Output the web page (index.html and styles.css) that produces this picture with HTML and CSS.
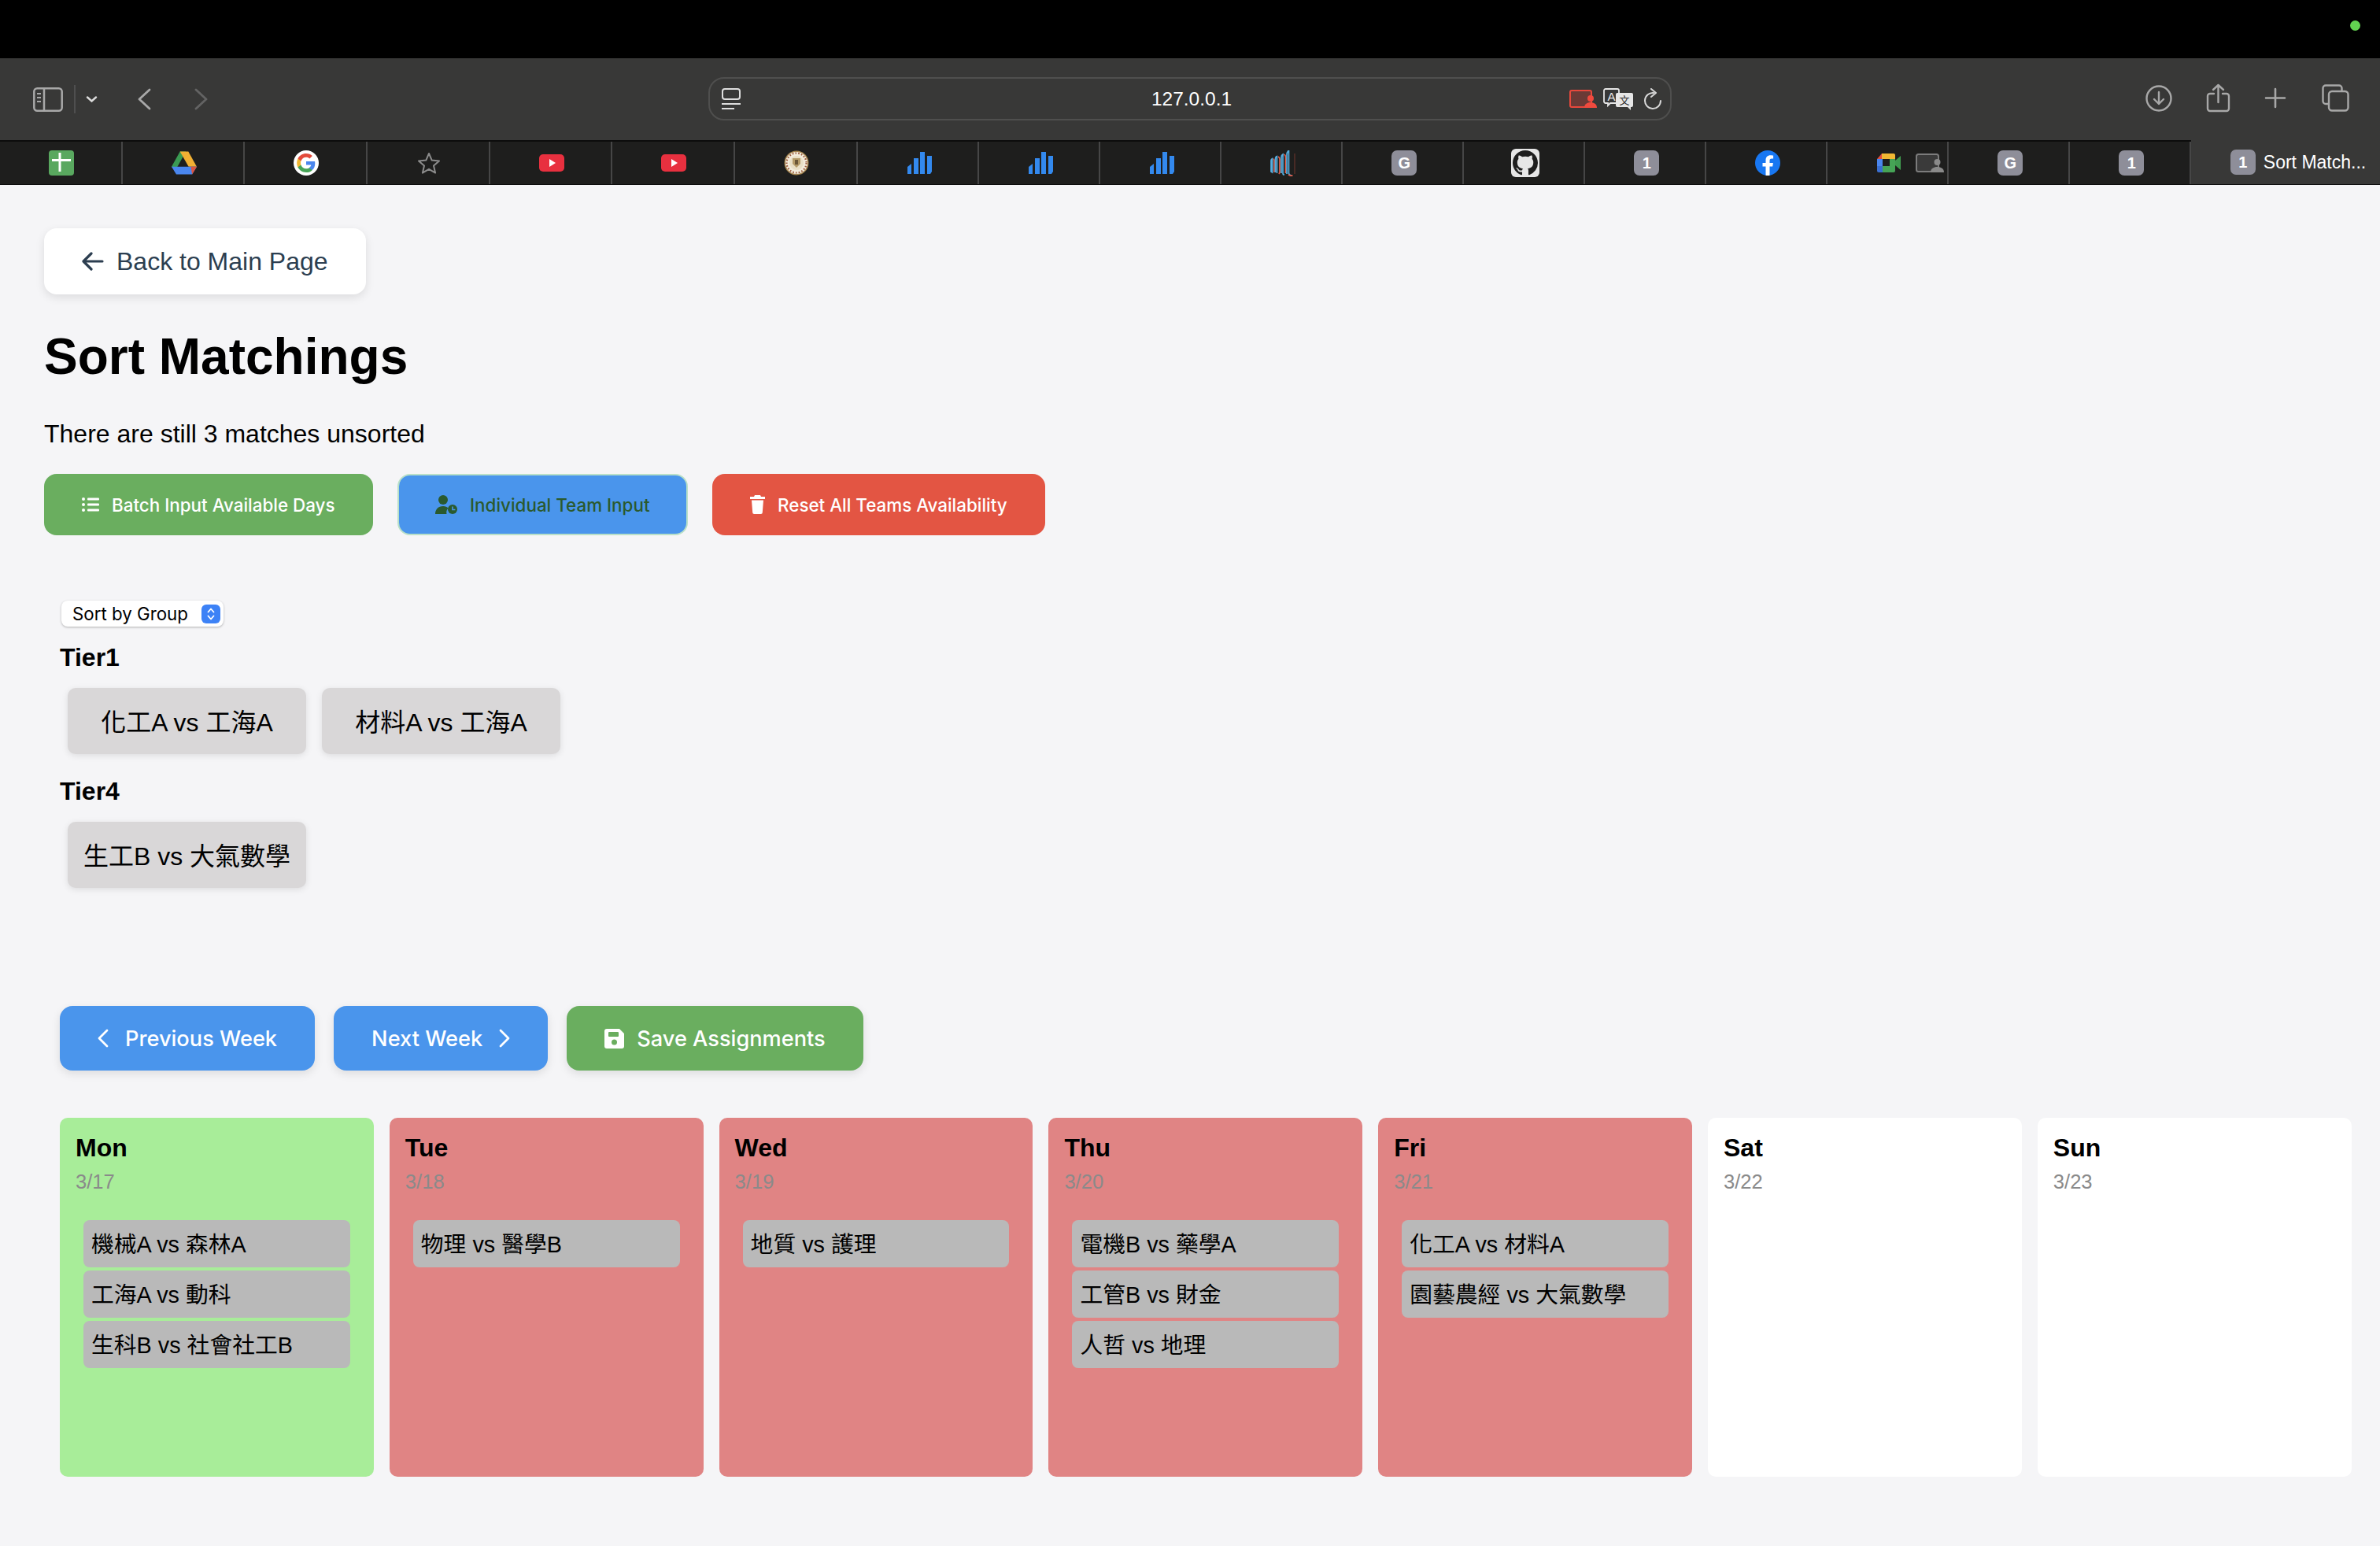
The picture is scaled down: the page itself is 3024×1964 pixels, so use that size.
FILE: index.html
```html
<!DOCTYPE html>
<html lang="zh-Hant">
<head>
<meta charset="utf-8">
<title>Sort Matchings</title>
<link rel="stylesheet" href="styles.css">
</head>
<body>
<div class="menubar"><span class="mic-dot"></span></div>

<header class="toolbar">
  <div class="tb-left">
    <svg class="ic-sidebar" viewBox="0 0 38 31" fill="none" stroke="#a8a8a8" stroke-width="2.5"><rect x="1.3" y="1.3" width="35.4" height="28.4" rx="4"/><path d="M14 1.3v28.4"/><path d="M5 8h5M5 13h5M5 18h5" stroke-width="2"/></svg>
    <span class="tb-divider"></span>
    <svg class="ic-caret" viewBox="0 0 15 8" fill="none" stroke="#dcdcdc" stroke-width="2.4" stroke-linecap="round"><path d="M2 1.5l5.5 5 5.5-5"/></svg>
    <svg class="ic-back" viewBox="0 0 17 28" fill="none" stroke="#a8a8a8" stroke-width="2.8" stroke-linecap="round" stroke-linejoin="round"><path d="M15 2L2 14l13 12"/></svg>
    <svg class="ic-forward" viewBox="0 0 17 28" fill="none" stroke="#636363" stroke-width="2.8" stroke-linecap="round" stroke-linejoin="round"><path d="M2 2l13 12L2 26"/></svg>
  </div>
  <div class="urlbar">
    <svg class="ic-reader" viewBox="0 0 24 27" fill="none" stroke="#dedede" stroke-width="2"><rect x="1" y="1" width="22" height="13" rx="3"/><path d="M0 20h24" /><path d="M0 26h16"/></svg>
    <span class="url-text">127.0.0.1</span>
    <div class="url-tools">
      <svg class="ic-pip-red" viewBox="0 0 36 23"><rect x="1" y="1" width="27" height="21" rx="2" fill="#6b3a36" stroke="#e8483c" stroke-width="2"/><circle cx="27" cy="11" r="4" fill="#f04a3e"/><path d="M19 23c0-5 4-7 8-7s8 2 8 7z" fill="#f04a3e"/></svg>
      <svg class="ic-translate" viewBox="0 0 38 28"><path d="M3 1h15a2 2 0 0 1 2 2v14a2 2 0 0 1-2 2H9l-3 3v-3H3a2 2 0 0 1-2-2V3a2 2 0 0 1 2-2z" fill="#383838" stroke="#e6e6e6" stroke-width="1.8"/><text x="10.500" y="15.500" class="tr-a">A</text><path d="M18 6h18a2 2 0 0 1 2 2v14a2 2 0 0 1-2 2h-1v4l-4-4H18a2 2 0 0 1-2-2V8a2 2 0 0 1 2-2z" fill="#e6e6e6"/><text x="27" y="20" class="tr-b">文</text></svg>
      <svg class="ic-reload" viewBox="0 0 23 27" fill="none" stroke="#d8d8d8" stroke-width="2" stroke-linecap="round" stroke-linejoin="round"><path d="M13 6a10 10 0 1 0 9 10"/><path d="M10 1l6 5-6 5"/></svg>
    </div>
  </div>
  <div class="tb-right">
    <svg class="ic-download" viewBox="0 0 34 34" fill="none" stroke="#a8a8a8" stroke-width="2.4" stroke-linecap="round" stroke-linejoin="round"><circle cx="17" cy="17" r="15.500"/><path d="M17 9v15M11 18l6 6 6-6"/></svg>
    <svg class="ic-share" viewBox="0 0 31 37" fill="none" stroke="#a8a8a8" stroke-width="2.400" stroke-linecap="round" stroke-linejoin="round"><path d="M10 13H5a3 3 0 0 0-3 3v16a3 3 0 0 0 3 3h21a3 3 0 0 0 3-3V16a3 3 0 0 0-3-3h-5"/><path d="M15.500 24V2M9 8l6.500-6L22 8"/></svg>
    <svg class="ic-plus" viewBox="0 0 28 27" fill="none" stroke="#a8a8a8" stroke-width="2.600" stroke-linecap="round"><path d="M14 2v23M2 13.500h24"/></svg>
    <svg class="ic-tabs" viewBox="0 0 35 35" fill="none" stroke="#a8a8a8" stroke-width="2.400"><path d="M8 25H5a3.500 3.500 0 0 1-3.500-3.500V5A3.500 3.500 0 0 1 5 1.500h17A3.500 3.500 0 0 1 25.500 5v3"/><rect x="9" y="9" width="24.500" height="24.500" rx="4"/></svg>
  </div>
</header>

<nav class="tabstrip">
  <div class="tab">
    <svg class="fav" viewBox="0 0 32 32"><rect width="32" height="32" rx="4" fill="#59a85f"/><path d="M12.500 3h3v24h-3zM4 11h24v3H4z" fill="#fff"/></svg>
  </div>
  <div class="tab">
    <svg class="fav" viewBox="0 0 30 27"><path d="M10 0h7L7 18l-3.500 3-3.500-3z" fill="#3a9a52"/><path d="M10 0h10l10 18H20.300z" fill="#f1b033"/><path d="M5.600 27L0 18h30l-5.500 9z" fill="#4a86ee"/><path d="M23 18h7l-5.500 9z" fill="#dd5440"/></svg>
  </div>
  <div class="tab">
    <svg class="fav" viewBox="0 0 32 32"><circle cx="16" cy="16" r="16" fill="#fff"/><g transform="translate(16 16) scale(1.270) translate(-16 -16)"><path d="M24.900 16.300c0-.7-.1-1.300-.2-1.900H16v3.600h5c-.2 1.100-.9 2.100-1.900 2.800v2.300h3c1.800-1.600 2.800-4 2.800-6.800z" fill="#4a86ee"/><path d="M16 25.500c2.500 0 4.600-.8 6.100-2.300l-3-2.300c-.8.600-1.900.9-3.100.9-2.400 0-4.400-1.600-5.200-3.800H7.700v2.400c1.500 3 4.700 5.100 8.300 5.100z" fill="#46a456"/><path d="M10.800 18c-.2-.6-.3-1.300-.3-2s.1-1.400.3-2v-2.400H7.700C7.100 12.900 6.700 14.400 6.700 16s.4 3.100 1 4.400z" fill="#f1b833"/><path d="M16 10.200c1.400 0 2.600.5 3.500 1.400l2.700-2.700C20.600 7.400 18.500 6.500 16 6.500c-3.600 0-6.800 2.100-8.300 5.100l3.100 2.400c.8-2.200 2.800-3.800 5.200-3.800z" fill="#e24a3b"/></g></svg>
  </div>
  <div class="tab">
    <svg class="fav fav-star" viewBox="0 0 30 28" fill="none" stroke="#8c8c8c" stroke-width="2" stroke-linejoin="round"><path d="M15 2l3.700 8.600 9.300.8-7 6.100 2.100 9.100L15 21.800l-8.100 4.800L9 17.500l-7-6.100 9.300-.8z"/></svg>
  </div>
  <div class="tab">
    <svg class="fav fav-yt" viewBox="0 0 32 22"><rect width="32" height="22" rx="5" fill="#e8303f"/><path d="M13 6l8 5-8 5z" fill="#fff"/></svg>
  </div>
  <div class="tab">
    <svg class="fav fav-yt" viewBox="0 0 32 22"><rect width="32" height="22" rx="5" fill="#e8303f"/><path d="M13 6l8 5-8 5z" fill="#fff"/></svg>
  </div>
  <div class="tab">
    <svg class="fav" viewBox="0 0 32 32"><circle cx="16" cy="16" r="15.500" fill="#a5854f"/><circle cx="16" cy="16" r="14" fill="#f3ecdc"/><circle cx="16" cy="16" r="12.500" fill="none" stroke="#9c5a3e" stroke-width="2.200" stroke-dasharray="1.600 2.200"/><circle cx="16" cy="16" r="9" fill="#e9dfc6"/><path d="M11 10h10v7l-5 5-5-5z" fill="#b49a68"/><path d="M14 12h4v6h-4z" fill="#6a5636"/></svg>
  </div>
  <div class="tab tab-late">
    <svg class="fav fav-bars" viewBox="0 0 31 28" fill="#3389ee"><path d="M0 28V19l5-4v13zM8 28V8h6v20zM16 28V0h6v28zM25 28V5h6v20l-2 3z"/></svg>
  </div>
  <div class="tab tab-late">
    <svg class="fav fav-bars" viewBox="0 0 31 28" fill="#3389ee"><path d="M0 28V19l5-4v13zM8 28V8h6v20zM16 28V0h6v28zM25 28V5h6v20l-2 3z"/></svg>
  </div>
  <div class="tab tab-late">
    <svg class="fav fav-bars" viewBox="0 0 31 28" fill="#3389ee"><path d="M0 28V19l5-4v13zM8 28V8h6v20zM16 28V0h6v28zM25 28V5h6v20l-2 3z"/></svg>
  </div>
  <div class="tab tab-late">
    <svg class="fav fav-outline" viewBox="0 0 32 33" fill="none" stroke-width="1.700"><path d="M1 27V13q0-2 1.500-2.500V28z" stroke="#55aee0"/><path d="M3.500 11q1.500 0 1.500 2v15" stroke="#e0604f"/><path d="M6.500 28V11q0-3 2-3.500V29" stroke="#55aee0"/><path d="M10 8q2 1 2 3v17l-1 2" stroke="#e0604f"/><path d="M14 29V9q0-3 2-4v24q0 2 2 2" stroke="#55aee0"/><path d="M17.500 5q2 1 2 4v20" stroke="#e0604f"/><path d="M21 30V6q0-4 2.500-6v29q0 2 3 3" stroke="#55aee0"/><path d="M23 31q3 1.500 5.500 1" stroke="#e0604f"/><path d="M31 4v26" stroke="#7a3a30" stroke-width=".9"/></svg>
  </div>
  <div class="tab tab-late"><span class="badge">G</span></div>
  <div class="tab tab-late">
    <span class="gh-tile"><svg class="gh-mark" viewBox="0 0 16 16" fill="#1e1e1e"><path d="M8 0C3.580 0 0 3.580 0 8c0 3.540 2.290 6.530 5.470 7.590.4.070.55-.17.55-.38 0-.19-.01-.82-.01-1.490-2.010.37-2.530-.49-2.690-.94-.09-.23-.48-.94-.82-1.130-.28-.15-.68-.52-.01-.53.63-.01 1.080.58 1.230.82.72 1.210 1.870.87 2.330.66.07-.52.28-.87.51-1.070-1.780-.2-3.640-.89-3.640-3.950 0-.87.31-1.590.82-2.150-.08-.2-.36-1.020.08-2.120 0 0 .67-.21 2.200.82.64-.18 1.320-.27 2-.27.68 0 1.360.09 2 .27 1.530-1.040 2.200-.82 2.200-.82.44 1.100.16 1.920.08 2.120.51.56.82 1.270.82 2.150 0 3.070-1.870 3.750-3.650 3.950.29.25.54.73.54 1.480 0 1.070-.01 1.930-.01 2.200 0 .21.15.46.55.38A8.013 8.013 0 0016 8c0-4.420-3.580-8-8-8z"/></svg></span>
  </div>
  <div class="tab tab-late"><span class="badge">1</span></div>
  <div class="tab tab-late">
    <svg class="fav" viewBox="0 0 32 32"><circle cx="16" cy="16" r="16" fill="#1877f2"/><path d="M22.200 20.600l.7-4.600h-4.400v-3c0-1.300.6-2.500 2.600-2.500h2V6.500s-1.800-.3-3.600-.3c-3.600 0-6 2.200-6 6.200V16H9.500v4.600h4v11.200c.8.100 1.600.2 2.500.2s1.700-.1 2.500-.2V20.600z" fill="#fff"/></svg>
  </div>
  <div class="tab tab-late tab-meet">
    <svg class="fav-meet" viewBox="0 0 30 24"><path d="M6 0h15a2 2 0 0 1 2 2v5H6z" fill="#f1b833"/><path d="M6 0v7H0z" fill="#e0503f"/><path d="M0 7h7v9H0z" fill="#4a86ee"/><path d="M0 16h7v8H2a2 2 0 0 1-2-2z" fill="#3a6fd0"/><path d="M7 16h16v6a2 2 0 0 1-2 2H7z" fill="#46a456"/><path d="M16 7h7v9h-7z" fill="#46a456"/><path d="M23 9l7-6v18l-7-6z" fill="#3f9a4f"/></svg>
    <svg class="fav-pip" viewBox="0 0 36 24"><rect x="1" y="1" width="28" height="22" rx="2.500" fill="#3a3a3a" stroke="#7c7c7c" stroke-width="2"/><circle cx="27.500" cy="11" r="4" fill="#8a8a8a"/><path d="M19 24c0-5 4-7 8.500-7s8.500 2 8.500 7z" fill="#8a8a8a"/></svg>
  </div>
  <div class="tab tab-late"><span class="badge">G</span></div>
  <div class="tab tab-late"><span class="badge">1</span></div>
  <div class="tab tab-active"><span class="badge">1</span><span class="tab-title">Sort Match...</span></div>
</nav>

<main class="page">
  <a class="back-btn">
    <svg class="ic-arrow" viewBox="0 0 28 24" fill="none" stroke="#2c3e50" stroke-width="3.200" stroke-linecap="round" stroke-linejoin="round"><path d="M26 12H3M12 2L2 12l10 10"/></svg>
    Back to Main Page
  </a>
  <h1 class="title">Sort Matchings</h1>
  <p class="status">There are still 3 matches unsorted</p>
  <div class="actions">
    <button class="act act-green">
      <svg class="act-ic" viewBox="0 0 22 20" fill="#fff"><circle cx="2" cy="3" r="2"/><circle cx="2" cy="10" r="2"/><circle cx="2" cy="17" r="2"/><rect x="7" y="1.500" width="15" height="3" rx="1"/><rect x="7" y="8.500" width="15" height="3" rx="1"/><rect x="7" y="15.500" width="15" height="3" rx="1"/></svg>
      Batch Input Available Days
    </button>
    <button class="act act-blue">
      <svg class="act-ic act-ic-user" viewBox="0 0 28 24" fill="#2a5a2e"><circle cx="10" cy="6" r="6"/><path d="M0 24c0-6 4-10 10-10 3 0 5 1 6.500 2.500A8 8 0 0 0 14.500 24z"/><circle cx="22" cy="18" r="6"/><path d="M21.200 14.500h1.600v3.200h2.600v1.600h-4.200z" fill="#4a95ec"/></svg>
      Individual Team Input
    </button>
    <button class="act act-red">
      <svg class="act-ic act-ic-trash" viewBox="0 0 19 24" fill="#fff"><path d="M6 0h7l1 2h5v3H0V2h5z"/><path d="M2 6.500h15L15.800 22a2 2 0 0 1-2 2H5.200a2 2 0 0 1-2-2z"/></svg>
      Reset All Teams Availability
    </button>
  </div>

  <section class="pool">
    <div class="sort-wrap">
      <select class="sort-select"><option>Sort by Group</option></select>
      <span class="stepper"><svg viewBox="0 0 12 18" fill="none" stroke="#fff" stroke-width="1.800" stroke-linecap="round" stroke-linejoin="round"><path d="M2.500 6.500L6 2.500l3.500 4M2.500 11.500L6 15.500l3.500-4"/></svg></span>
    </div>
    <h3 class="tier">Tier1</h3>
    <div class="chips">
      <div class="chip">化工A vs 工海A</div>
      <div class="chip">材料A vs 工海A</div>
    </div>
    <h3 class="tier">Tier4</h3>
    <div class="chips">
      <div class="chip">生工B vs 大氣數學</div>
    </div>
  </section>

  <div class="week-nav">
    <button class="nav-btn nav-blue">
      <svg class="nav-ic" viewBox="0 0 14 24" fill="none" stroke="#fff" stroke-width="2.800" stroke-linecap="round" stroke-linejoin="round"><path d="M12 2L2 12l10 10"/></svg>
      Previous Week
    </button>
    <button class="nav-btn nav-blue">
      Next Week
      <svg class="nav-ic" viewBox="0 0 14 24" fill="none" stroke="#fff" stroke-width="2.800" stroke-linecap="round" stroke-linejoin="round"><path d="M2 2l10 10L2 22"/></svg>
    </button>
    <button class="nav-btn nav-green">
      <svg class="nav-ic nav-ic-save" viewBox="0 0 25 25"><path d="M3 0h16l6 6v16a3 3 0 0 1-3 3H3a3 3 0 0 1-3-3V3a3 3 0 0 1 3-3z" fill="#fff"/><rect x="5" y="4" width="13" height="6" rx="1" fill="#6aae5f"/><circle cx="12.500" cy="17" r="3.500" fill="#6aae5f"/></svg>
      Save Assignments
    </button>
  </div>

  <section class="calendar">
    <article class="day day-ok">
      <h4 class="day-name">Mon</h4><div class="day-date">3/17</div>
      <ul class="matches"><li>機械A vs 森林A</li><li>工海A vs 動科</li><li>生科B vs 社會社工B</li></ul>
    </article>
    <article class="day day-bad">
      <h4 class="day-name">Tue</h4><div class="day-date">3/18</div>
      <ul class="matches"><li>物理 vs 醫學B</li></ul>
    </article>
    <article class="day day-bad">
      <h4 class="day-name">Wed</h4><div class="day-date">3/19</div>
      <ul class="matches"><li>地質 vs 護理</li></ul>
    </article>
    <article class="day day-bad">
      <h4 class="day-name">Thu</h4><div class="day-date">3/20</div>
      <ul class="matches"><li>電機B vs 藥學A</li><li>工管B vs 財金</li><li>人哲 vs 地理</li></ul>
    </article>
    <article class="day day-bad">
      <h4 class="day-name">Fri</h4><div class="day-date">3/21</div>
      <ul class="matches"><li>化工A vs 材料A</li><li>園藝農經 vs 大氣數學</li></ul>
    </article>
    <article class="day">
      <h4 class="day-name">Sat</h4><div class="day-date">3/22</div>
    </article>
    <article class="day">
      <h4 class="day-name">Sun</h4><div class="day-date">3/23</div>
    </article>
  </section>
</main>
</body>
</html>
```

FILE: styles.css
```css
* { box-sizing: border-box; }
html, body { margin: 0; padding: 0; }
body {
  width: 3024px;
  height: 1964px;
  overflow: hidden;
  background: #f5f5f7;
  font-family: "Liberation Sans", "Noto Sans CJK TC", sans-serif;
  color: #000;
}
svg { display: block; flex: none; }

/* macOS menu bar */
.menubar {
  height: 74px;
  background: #000;
  display: flex;
  justify-content: flex-end;
  padding: 26px 25px 0 0;
}
.mic-dot { width: 13px; height: 13px; border-radius: 50%; background: #63d451; }

/* Safari toolbar */
.toolbar {
  height: 104px;
  background: #383837;
  display: grid;
  grid-template-columns: 900px 1224px 1fr;
  align-items: center;
}
.tb-left { display: flex; align-items: center; padding-left: 42px; }
.ic-sidebar { width: 38px; height: 31px; }
.tb-divider { width: 2px; height: 36px; background: #4f4f4f; margin-left: 14px; }
.ic-caret { width: 15px; height: 8px; margin-left: 13px; }
.ic-back { width: 17px; height: 28px; margin-left: 51px; }
.ic-forward { width: 17px; height: 28px; margin-left: 55px; }

.urlbar {
  height: 55px;
  margin-top: -1px;
  border: 2px solid #4f4f4e;
  border-radius: 20px;
  display: grid;
  grid-template-columns: 1fr auto 1fr;
  align-items: center;
  padding: 0 11px 0 15px;
}
.ic-reader { width: 24px; height: 27px; }
.url-text { color: #fff; font-size: 24.500px; line-height: 30px; }
.url-tools { display: flex; align-items: center; justify-content: flex-end; }
.ic-pip-red { width: 36px; height: 23px; }
.ic-translate { width: 38px; height: 28px; margin-left: 7px; }
.ic-reload { width: 23px; height: 27px; margin-left: 13px; }
.tr-a { font: 15px "Liberation Sans", sans-serif; fill: #e6e6e6; text-anchor: middle; }
.tr-b { font: 13px "Noto Sans CJK TC", sans-serif; fill: #2c2c2c; text-anchor: middle; }

.tb-right { display: flex; align-items: center; justify-content: flex-end; padding-right: 39px; gap: 43px; }
.ic-download { width: 34px; height: 34px; margin-top: -2px; }
.ic-share { width: 31px; height: 37px; margin-top: -4px; }
.ic-plus { width: 28px; height: 27px; margin-top: -3px; }
.ic-tabs { width: 35px; height: 35px; margin: -3px 0 0 2px; }

/* Tab strip */
.tabstrip {
  height: 57px;
  background: #1e1e1d;
  border-top: 2px solid #0c0c0c;
  border-bottom: 1px solid #0c0c0c;
  display: grid;
  grid-template-columns: repeat(7, 155.7px) repeat(11, 154px) 1fr;
}
.tab {
  display: flex;
  align-items: center;
  justify-content: center;
  padding-left: 2px;
  border-right: 2px solid #464646;
}
.tab-late { padding-left: 5px; }
.fav { width: 32px; height: 32px; }
.fav-star { width: 30px; height: 28px; }
.fav-yt { height: 22px; }
.fav-bars { width: 31px; height: 28px; }
.fav-outline { width: 32px; height: 33px; }
.tab-meet { justify-content: flex-end; padding-right: 4px; gap: 19px; }
.fav-meet { width: 30px; height: 24px; }
.fav-pip { width: 36px; height: 24px; }
.badge {
  width: 32px;
  height: 32px;
  border-radius: 7px;
  background: #8e8e99;
  color: #fff;
  font-size: 20px;
  font-weight: 700;
  display: flex;
  align-items: center;
  justify-content: center;
}
.gh-tile {
  width: 36px;
  height: 36px;
  border-radius: 6px;
  background: #e6e6e6;
  display: flex;
  align-items: center;
  justify-content: center;
}
.gh-mark { width: 32px; height: 32px; }
.tab-active {
  background: #383837;
  border-right: 0;
  margin-top: -2px;
  justify-content: flex-start;
  padding-left: 50px;
  gap: 10px;
}
.tab-title { color: #fff; font-size: 23px; white-space: nowrap; }

/* Page */
.page { padding: 55px 35px 0 56px; }
.back-btn {
  display: inline-flex;
  align-items: center;
  gap: 16px;
  height: 84px;
  padding: 0 48px;
  background: #fff;
  border-radius: 16px;
  box-shadow: 0 4px 12px rgba(0, 0, 0, .1);
  color: #2c3e50;
  font-size: 32px;
}
.ic-arrow { width: 28px; height: 24px; }
.title { margin: 42px 0 0; font-size: 64px; line-height: 74px; font-weight: 700; }
.status { margin: 42px 0 0; font-size: 32px; line-height: 38px; }
.actions { display: flex; gap: 31.500px; margin-top: 32px; }
.act {
  display: flex;
  align-items: center;
  gap: 16px;
  height: 78px;
  padding: 0 48px;
  border: 0;
  border-radius: 16px;
  color: #fff;
  font-family: Inter, sans-serif;
  font-size: 22.400px;
  font-weight: 500;
}
.act-green { background: #6aae5f; }
.act-blue { background: #4a95ec; color: #2a5a2e; border: 2px solid #b9e0c8; padding: 0 46px; }
.act-red { background: #e35543; }
.act-ic { width: 22px; height: 20px; }
.act-ic-user { width: 28px; height: 24px; }
.act-ic-trash { width: 19px; height: 24px; }

.pool { padding-left: 20px; margin-top: 83px; }
.sort-wrap { position: relative; width: 206px; height: 33px; margin-left: 2px; }
.sort-select {
  appearance: none;
  -webkit-appearance: none;
  width: 100%;
  height: 100%;
  padding: 0 0 0 14px;
  border: 0;
  border-radius: 8px;
  background: #fff;
  box-shadow: 0 1px 3px rgba(0, 0, 0, .28);
  color: #000;
  font-family: Inter, sans-serif;
  font-size: 22.300px;
}
.stepper {
  position: absolute;
  right: 4px;
  top: 5px;
  width: 24px;
  height: 24px;
  border-radius: 6px;
  background: #3d82f6;
  display: flex;
  align-items: center;
  justify-content: center;
  pointer-events: none;
}
.stepper svg { width: 12px; height: 18px; }
.tier { margin: 21px 0 21px; font-size: 32px; line-height: 36px; font-weight: 700; }
.chips { display: flex; gap: 20px; margin-left: 10px; }
.chip {
  width: 303px;
  height: 84px;
  padding-bottom: 2px;
  border-radius: 10px;
  background: #d9d7d8;
  box-shadow: 0 2px 8px rgba(0, 0, 0, .1);
  display: flex;
  align-items: center;
  justify-content: center;
  font-size: 32px;
}
.chips + .tier { margin-top: 29px; }

.week-nav { display: flex; gap: 24px; margin: 150px 0 0 20px; }
.nav-btn {
  display: flex;
  align-items: center;
  gap: 21px;
  height: 82px;
  padding: 0 48px;
  border: 0;
  border-radius: 16px;
  color: #fff;
  font-family: Inter, sans-serif;
  font-size: 27.200px;
  font-weight: 500;
  box-shadow: 0 4px 12px rgba(0, 0, 0, .1);
}
.nav-blue { background: #4a95ec; }
.nav-green { background: #6aae5f; gap: 16px; }
.nav-ic { width: 14px; height: 24px; }
.nav-ic-save { width: 25px; height: 25px; }

.calendar {
  display: grid;
  grid-template-columns: repeat(7, 398.8px);
  gap: 20px;
  margin: 60px 0 0 20px;
}
.day {
  height: 456px;
  padding: 20px;
  border-radius: 10px;
  background: #fff;
}
.day-ok { background: #a8ed99; }
.day-bad { background: #e08484; }
.day-name { margin: 0; font-size: 32px; line-height: 36px; font-weight: 700; }
.day-date { margin-top: 10px; font-size: 25.600px; line-height: 30px; color: #8a8a8a; }
.matches { list-style: none; margin: 34px 0 0; padding: 0 10px; }
.matches li {
  height: 60px;
  padding: 0 10px 3px;
  border-radius: 8px;
  background: #b9b9b9;
  display: flex;
  align-items: center;
  font-size: 28.800px;
}
.matches li + li { margin-top: 4px; }
```
